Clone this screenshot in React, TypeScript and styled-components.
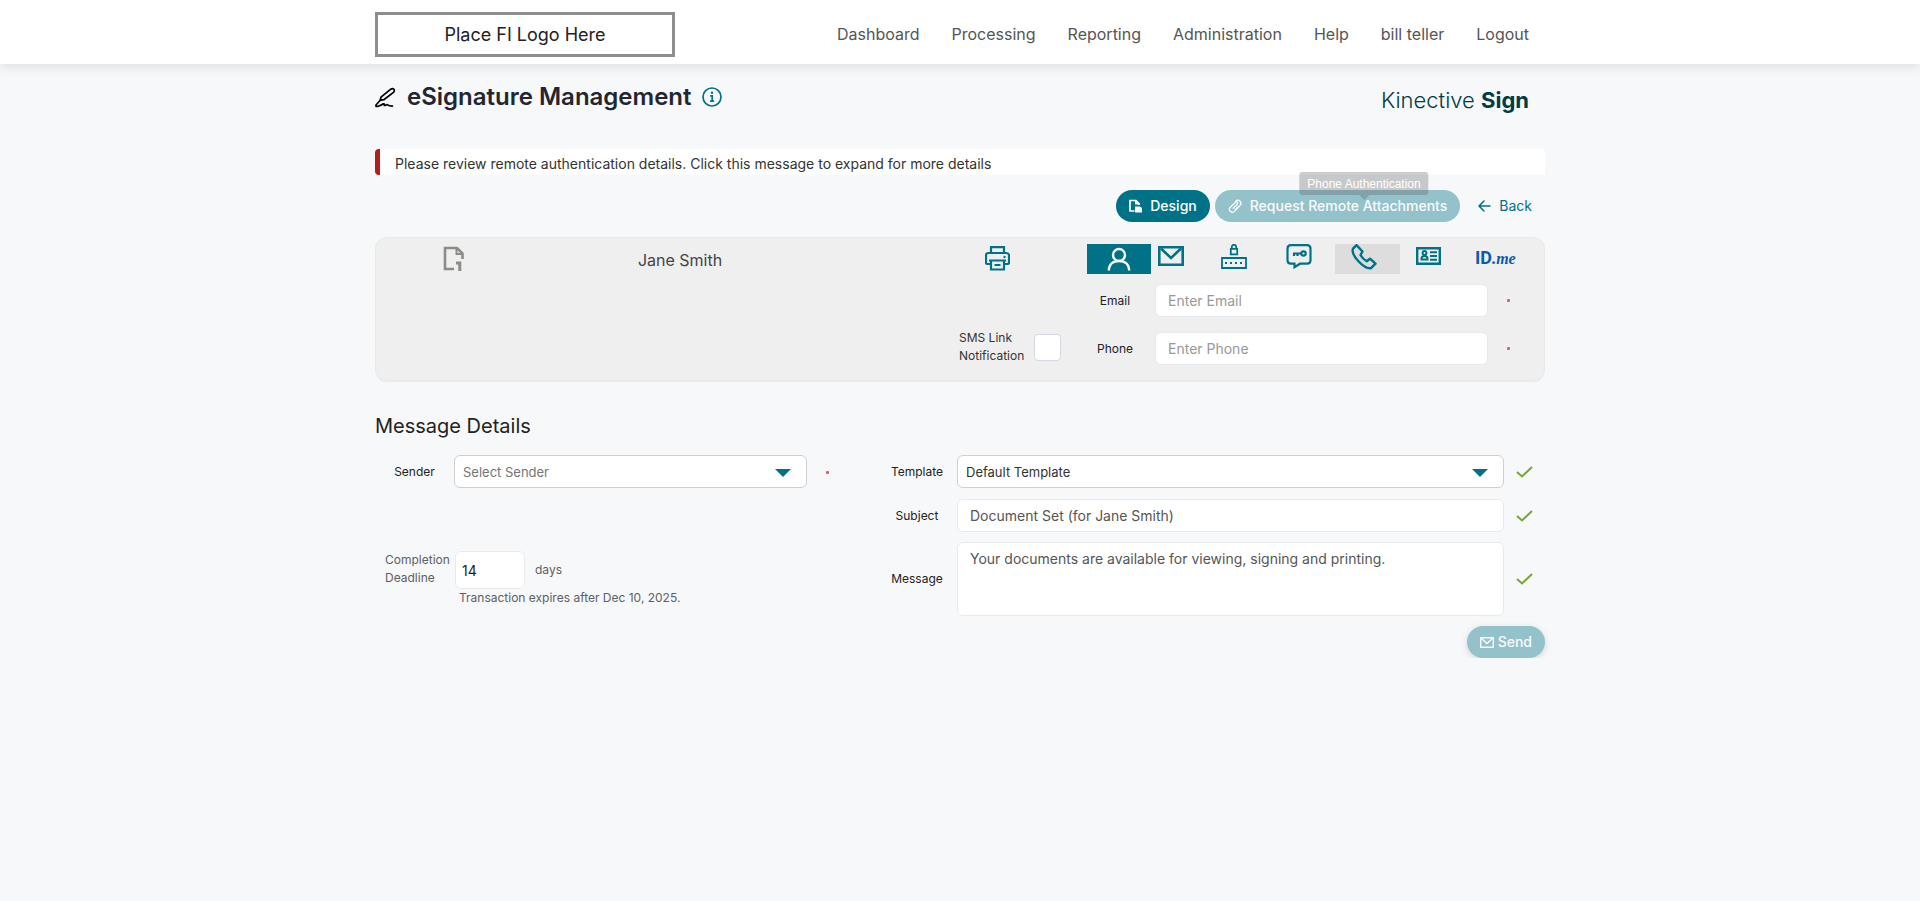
import React from "react";
import styled, { createGlobalStyle, css } from "styled-components";

const teal = "#007287";

const Global = createGlobalStyle`
  *, *::before, *::after { box-sizing: border-box; }
  body { margin: 0; background: #f7f8fa; color: #333; font: 14px/18px Inter, "Liberation Sans", sans-serif; }
  button, input, select, textarea { font-family: inherit; margin: 0; }
`;

const Container = styled.div`
  width: 100%;
  max-width: 1170px;
  margin: 0 auto;
`;

const Header = styled.header`
  background: #fff;
  box-shadow: 0 2px 12px rgba(0, 0, 0, 0.12);
`;

const HeaderBar = styled(Container)`
  display: flex;
  align-items: center;
  justify-content: space-between;
  height: 64px;
  padding: 5px 16px 0 0;
`;

const LogoBox = styled.div`
  display: flex;
  align-items: center;
  justify-content: center;
  width: 300px;
  height: 45px;
  border: 3px solid #8e8e8e;
  color: #222;
  font-size: 18px;
  line-height: 24px;
`;

const Nav = styled.nav`
  display: flex;
  gap: 32px;
  padding-bottom: 2px;
`;

const NavLink = styled.a`
  color: #555;
  font-size: 16px;
  line-height: 24px;
  text-decoration: none;
`;

const TitleRow = styled.div`
  display: flex;
  align-items: center;
  justify-content: space-between;
  height: 40px;
  margin-top: 13px;
  padding-right: 16px;
`;

const TitleGroup = styled.div`
  display: flex;
  align-items: center;
`;

const Title = styled.h1`
  margin: 0 10px 0 11px;
  color: #23262f;
  font-size: 24px;
  font-weight: 600;
  line-height: 32px;
`;

const IconButton = styled.button`
  display: flex;
  padding: 0;
  border: 0;
  background: none;
  color: ${teal};
`;

const Brand = styled.div`
  padding-top: 6px;
  color: #003c46;
  font-size: 22px;
  font-weight: 300;
  line-height: 32px;
  strong { font-weight: 700; }
`;

const Banner = styled.button`
  display: block;
  width: 100%;
  height: 26px;
  margin-top: 32px;
  padding: 4px 15px 0;
  border: 0;
  border-left: 5px solid #b71c1c;
  border-radius: 4px 4px 0 4px;
  background: #fff;
  color: #333;
  font-size: 14px;
  line-height: 20px;
  text-align: left;
`;

const Actions = styled.div`
  display: flex;
  align-items: center;
  justify-content: flex-end;
  gap: 5px;
  margin-top: 15px;
`;

const Button = styled.button<{ $plain?: boolean; $raised?: boolean }>`
  display: flex;
  align-items: center;
  gap: 8px;
  height: 32px;
  padding: 0 13px;
  border: 0;
  border-radius: 16px;
  background: ${(p) => (p.$plain ? "none" : teal)};
  color: ${(p) => (p.$plain ? teal : "#fff")};
  font-size: 14px;
  font-weight: ${(p) => (p.$plain ? 400 : 500)};
  line-height: 20px;
  &:disabled { opacity: 0.4; }
  ${(p) => p.$raised && css`
    gap: 4px;
    box-shadow: 0 2px 6px rgba(0, 0, 0, 0.35);
  `}
`;

const Card = styled.section`
  display: grid;
  grid-template-columns: 156px minmax(0, 1fr) 131px 128px minmax(0, 457px);
  margin-top: 15px;
  padding: 6px 0 15px;
  border: 1px solid #e9eaeb;
  border-bottom-width: 2px;
  border-radius: 12px;
  background: #efefef;
`;

const DocCell = styled.div`
  padding: 2px 0 0 67px;
  color: #8b8b87;
`;

const NameCell = styled.div`
  padding-top: 5px;
  color: #444;
  font-size: 16px;
  line-height: 22px;
  text-align: center;
`;

const DeliveryCell = styled.div`
  display: flex;
  flex-direction: column;
  grid-column: 4;
  justify-content: space-between;
  align-items: flex-start;
  padding-top: 2px;
`;

const PrintButton = styled(IconButton)`
  margin-left: 26px;
`;

const SmsLabel = styled.label`
  display: flex;
  align-items: center;
  gap: 10px;
  color: #333;
  font-size: 12px;
  span { width: 65px; }
`;

const CheckBox = styled.input`
  appearance: none;
  width: 27px;
  height: 27px;
  border: 1px solid #d9d8e2;
  border-radius: 4px;
  background: #fff;
`;

const AuthCell = styled.div`
  display: flex;
  flex-direction: column;
`;

const Methods = styled.div`
  display: flex;
  height: 30px;
  margin-bottom: 10px;
`;

const Method = styled.button<{ $state?: "on" | "hover" | "next" }>`
  position: relative;
  display: flex;
  flex: 0 0 65px;
  align-items: flex-start;
  padding: 0 0 0 16px;
  border: 0;
  background: none;
  color: ${teal};
  ${(p) => p.$state === "on" && css`
    flex-basis: 64px;
    justify-content: center;
    padding: 0;
    background: ${teal};
    color: #fff;
  `}
  ${(p) => p.$state === "next" && css`
    flex-basis: 54px;
    padding-left: 7px;
  `}
  ${(p) => p.$state === "hover" && css`
    background: #dddddd;
  `}
`;

const Tooltip = styled.span`
  position: absolute;
  bottom: 79px;
  left: 29px;
  transform: translateX(-50%);
  padding: 4px 8px 3px;
  border-radius: 3px;
  background: rgba(90, 90, 90, 0.3);
  color: #fff;
  font: 12px/16px "Liberation Sans", Arial, sans-serif;
  white-space: nowrap;
  &::after {
    content: "";
    position: absolute;
    top: 100%;
    left: 50%;
    margin-left: -5px;
    border: 5px solid transparent;
    border-bottom-width: 0;
    border-top-color: rgba(90, 90, 90, 0.3);
  }
`;

const IdMe = styled.span`
  margin-left: -6px;
  padding-top: 4px;
  color: #0a5cab;
  font: 700 18px/20px Roboto, sans-serif;
  i { font: italic 700 16px/20px "Liberation Serif", serif; }
`;

const AuthField = styled.div`
  display: grid;
  grid-template-columns: 68px minmax(0, 1fr) 41px;
  align-items: center;
  height: 33px;
  padding-right: 15px;
  & + & { margin-top: 15px; }
  > label { padding-right: 12px; }
`;

const Label = styled.label`
  color: #222;
  font-size: 12px;
  text-align: center;
`;

const field = css`
  width: 100%;
  border: 1px solid #e9eaec;
  border-radius: 6px;
  background: #fff;
  color: #555;
  font-size: 14px;
  &::placeholder { color: #999; opacity: 1; }
`;

const Input = styled.input`
  ${field}
  height: 33px;
  padding: 0 12px;
`;

const TextArea = styled.textarea`
  ${field}
  display: block;
  height: 74px;
  padding: 6px 12px;
  line-height: 20px;
  resize: none;
`;

const Required = styled.span`
  justify-self: center;
  width: 3px;
  height: 3px;
  border-radius: 1px;
  background: #dd5c66;
`;

const Heading = styled.h2`
  margin: 31px 0 15px;
  color: #222;
  font-size: 20px;
  font-weight: 400;
  line-height: 27px;
`;

const Form = styled.form`
  display: grid;
  grid-template-columns: minmax(0, 472px) minmax(0, 1fr);
  column-gap: 30px;
`;

const Column = styled.div`
  display: flex;
  flex-direction: column;
`;

const FormRow = styled.div<{ $wide?: boolean }>`
  display: grid;
  grid-template-columns: ${(p) => (p.$wide ? 80 : 79)}px minmax(0, 1fr) ${(p) => (p.$wide ? 41 : 40)}px;
  align-items: center;
  margin-bottom: ${(p) => (p.$wide ? 10 : 62)}px;
`;

const SelectBox = styled.div`
  position: relative;
  padding-bottom: 1px;
  svg { position: absolute; top: 14px; right: 16px; pointer-events: none; }
`;

const Select = styled.select<{ $empty?: boolean }>`
  appearance: none;
  display: block;
  width: 100%;
  height: 33px;
  padding: 0 40px 0 8px;
  border: 1px solid #cfcfd1;
  border-radius: 6px;
  background: #fff;
  color: ${(p) => (p.$empty ? "#757575" : "#333")};
  font-size: 13px;
`;

const Mark = styled.span`
  justify-self: center;
  display: flex;
  color: #74a832;
`;

const Deadline = styled.div`
  display: grid;
  grid-template-columns: 70px 70px 1fr;
  align-items: center;
  padding-left: 10px;
  color: #5c6066;
  font-size: 12px;
  > label { align-self: start; }
`;

const DaysInput = styled(Input)`
  height: 38px;
  padding: 0 6px;
  color: #222;
`;

const Days = styled.span`
  padding-left: 10px;
`;

const Expiry = styled.p`
  margin: 0 0 0 84px;
  color: #5c6066;
  font-size: 12px;
`;

const Footer = styled.div`
  display: flex;
  justify-content: flex-end;
`;

const PenIcon = () => (
  <svg width="21" height="21" viewBox="0 0 21 21" fill="none" stroke="#000" strokeWidth="1.700" strokeLinejoin="round" strokeLinecap="round">
    <path d="M5.200 13.300 6 10.200 15.800 2.200q1.700-1.300 2.900 0t.1 2.900L8.800 12.700Z" />
    <path d="M5.200 13.300 1 18v1.300h2.200q3-1 5.300-2.500 1-.3.700.8t1.300.8q1.500-1.200 2.500-.3t4.500 1" />
  </svg>
);

const InfoIcon = () => (
  <svg width="20" height="20" viewBox="0 0 20 20" fill="none" stroke="currentColor" strokeWidth="1.700">
    <circle cx="10" cy="10" r="9" />
    <path d="M8.200 8.800h2v5M8 14.200h4.200" />
    <circle cx="10" cy="5.800" r="1.200" fill="currentColor" stroke="none" />
  </svg>
);

const DesignIcon = () => (
  <svg width="13" height="14" viewBox="0 0 13 14" fill="none" stroke="currentColor" strokeWidth="1.700">
    <path d="M5.500 12H1V1.500h6L10 4.500V6" />
    <path d="M6 1v4.500h4.500Z" fill="currentColor" stroke="none" />
    <path d="M6 7.500h5l2 1.500v4.500H6Z" fill="currentColor" stroke="none" />
  </svg>
);

const ClipIcon = () => (
  <svg width="14" height="14" viewBox="0 0 24 24" fill="none" stroke="currentColor" strokeWidth="2.200" strokeLinecap="round">
    <path d="m9 16 7-7.500a2.200 2.200 0 0 0-3.200-3L4 14a5 5 0 0 0 7 7.200l9.500-10a5.300 5.300 0 0 0-7.500-7.500" />
    <path d="m17.500 13-5 5" />
  </svg>
);

const BackIcon = () => (
  <svg width="13" height="12" viewBox="0 0 13 12" fill="none" stroke="currentColor" strokeWidth="1.500" strokeLinecap="round" strokeLinejoin="round">
    <path d="M12 6H1M6 1 1 6l5 5" />
  </svg>
);

const DocIcon = () => (
  <svg width="22" height="25" viewBox="0 0 22 25" fill="none" stroke="currentColor" strokeWidth="2.600">
    <path d="M11 23H2V2h12l5.500 5.500V13" />
    <path d="M13.500 2v6h6" strokeWidth="2" />
    <path d="M13 17h3.800v8" strokeWidth="3" />
  </svg>
);

const PrinterIcon = () => (
  <svg width="25" height="25" viewBox="0 0 25 25" fill="none" stroke="currentColor" strokeWidth="2.200">
    <path d="M6 7V1.200h13V7M6 18H2.500A1.500 1.500 0 0 1 1 16.500V9.500Q1 7 3.500 7h18Q24 7 24 9.500v7a1.500 1.500 0 0 1-1.500 1.500H19" />
    <path d="M6 14.500h13v9H6ZM4 14.500h17M9.500 19h6" />
    <path d="M18.500 11h2" />
  </svg>
);

const PersonIcon = () => (
  <svg width="24" height="30" viewBox="0 0 24 30" fill="none" stroke="currentColor" strokeWidth="2.400">
    <circle cx="12" cy="11" r="6" />
    <path d="M1.800 26.500C2 20.500 6 17 12 17s10 3.500 10.200 9.500" />
  </svg>
);

const MailIcon = ({ size = 26 }: { size?: number }) => (
  <svg width={size} height={Math.round(size * 0.92)} viewBox="0 0 26 24" fill="none" stroke="currentColor" strokeWidth="2.600">
    <path d="M1.300 3.300h23.400v17.400H1.300Z" />
    <path d="m3 4.500 10 9.500 10-9.500" />
  </svg>
);

const PinIcon = () => (
  <svg width="26" height="26" viewBox="0 0 26 26" fill="none" stroke="currentColor" strokeWidth="1.800">
    <path d="M1 14h24v10H1Z" />
    <path d="M9.800 4.800h6.400v5.500H9.800ZM10.800 4.800V3a2.200 2.200 0 0 1 4.400 0v1.800" />
    <path d="M4 19h19" strokeWidth="2" strokeDasharray="2 3" />
  </svg>
);

const ChatKeyIcon = () => (
  <svg width="26" height="25" viewBox="0 0 26 25" fill="none" stroke="currentColor" strokeWidth="2.200">
    <path d="M5 1.200h16q3.500 0 3.500 3.500v11.500q0 3.500-3.500 3.500h-7l-5.500 3.500V19.700H5q-3.500 0-3.500-3.500V4.700q0-3.500 3.500-3.500Z" />
    <circle cx="17.500" cy="9.500" r="2.200" />
    <path d="M15.500 9.500H7M8 9.500V12M11.500 9.500V12" />
  </svg>
);

const PhoneIcon = () => (
  <svg width="26" height="26" viewBox="0 0 26 26" fill="none" stroke="currentColor" strokeWidth="2.400" strokeLinejoin="round">
    <path d="M5.500 1.200 2 4.700C-.5 11 13 25.500 20 24.200l4.500-4.500-5.500-5-3.300 2.600q-4-2.300-6.200-6.300L11.500 7.500Z" />
  </svg>
);

const IdCardIcon = () => (
  <svg width="25" height="24" viewBox="0 0 25 24" fill="none" stroke="currentColor" strokeWidth="2.400">
    <path d="M1.200 4.200h22.600v15.600H1.200Z" />
    <circle cx="8.500" cy="9" r="1.900" strokeWidth="2" />
    <path d="M5.500 15.500v-1q0-2.500 3-2.500t3 2.500v1ZM14 8.200h7M14 12h7M14 15.800h7" strokeWidth="2" />
  </svg>
);

const Caret = () => (
  <svg width="16" height="8" viewBox="0 0 16 8" fill={teal}>
    <path d="M0 0h16L8 8Z" />
  </svg>
);

const CheckIcon = () => (
  <svg width="17" height="12" viewBox="0 0 17 12" fill="none" stroke="currentColor" strokeWidth="2">
    <path d="m1 6 5 4.500L16 1" />
  </svg>
);

const Valid = () => <Mark><CheckIcon /></Mark>;

const links = ["Dashboard", "Processing", "Reporting", "Administration", "Help", "bill teller", "Logout"];

export default function App() {
  return (
    <>
      <Global />
      <Header>
        <HeaderBar>
          <LogoBox>Place FI Logo Here</LogoBox>
          <Nav>{links.map((l) => <NavLink key={l} href="#">{l}</NavLink>)}</Nav>
        </HeaderBar>
      </Header>
      <Container as="main">
        <TitleRow>
          <TitleGroup>
            <PenIcon />
            <Title>eSignature Management</Title>
            <IconButton type="button" aria-label="Information"><InfoIcon /></IconButton>
          </TitleGroup>
          <Brand>Kinective <strong>Sign</strong></Brand>
        </TitleRow>
        <Banner type="button">Please review remote authentication details. Click this message to expand for more details</Banner>
        <Actions>
          <Button type="button"><DesignIcon />Design</Button>
          <Button type="button" disabled><ClipIcon />Request Remote Attachments</Button>
          <Button type="button" $plain><BackIcon />Back</Button>
        </Actions>
        <Card>
          <DocCell><DocIcon /></DocCell>
          <NameCell>Jane Smith</NameCell>
          <DeliveryCell>
            <PrintButton type="button" aria-label="Print"><PrinterIcon /></PrintButton>
            <SmsLabel><span>SMS Link Notification</span><CheckBox type="checkbox" /></SmsLabel>
          </DeliveryCell>
          <AuthCell>
            <Methods>
              <Method type="button" $state="on" aria-label="In person"><PersonIcon /></Method>
              <Method type="button" $state="next" aria-label="Email"><MailIcon /></Method>
              <Method type="button" aria-label="Passcode"><PinIcon /></Method>
              <Method type="button" aria-label="Text message"><ChatKeyIcon /></Method>
              <Method type="button" $state="hover"><PhoneIcon /><Tooltip role="tooltip">Phone Authentication</Tooltip></Method>
              <Method type="button" aria-label="ID verification"><IdCardIcon /></Method>
              <Method type="button"><IdMe>ID.<i>me</i></IdMe></Method>
            </Methods>
            <AuthField>
              <Label htmlFor="email">Email</Label>
              <Input id="email" placeholder="Enter Email" />
              <Required />
            </AuthField>
            <AuthField>
              <Label htmlFor="phone">Phone</Label>
              <Input id="phone" placeholder="Enter Phone" />
              <Required />
            </AuthField>
          </AuthCell>
        </Card>
        <Heading>Message Details</Heading>
        <Form>
          <Column>
            <FormRow>
              <Label htmlFor="sender">Sender</Label>
              <SelectBox>
                <Select id="sender" $empty><option>Select Sender</option></Select>
                <Caret />
              </SelectBox>
              <Required />
            </FormRow>
            <Deadline>
              <label htmlFor="days">Completion Deadline</label>
              <DaysInput id="days" defaultValue="14" />
              <Days>days</Days>
            </Deadline>
            <Expiry>Transaction expires after Dec 10, 2025.</Expiry>
          </Column>
          <Column>
            <FormRow $wide>
              <Label htmlFor="template">Template</Label>
              <SelectBox>
                <Select id="template"><option>Default Template</option></Select>
                <Caret />
              </SelectBox>
              <Valid />
            </FormRow>
            <FormRow $wide>
              <Label htmlFor="subject">Subject</Label>
              <Input id="subject" defaultValue="Document Set (for Jane Smith)" />
              <Valid />
            </FormRow>
            <FormRow $wide>
              <Label htmlFor="message">Message</Label>
              <TextArea id="message" defaultValue="Your documents are available for viewing, signing and printing." />
              <Valid />
            </FormRow>
            <Footer>
              <Button type="submit" disabled $raised><MailIcon size={14} />Send</Button>
            </Footer>
          </Column>
        </Form>
      </Container>
    </>
  );
}
